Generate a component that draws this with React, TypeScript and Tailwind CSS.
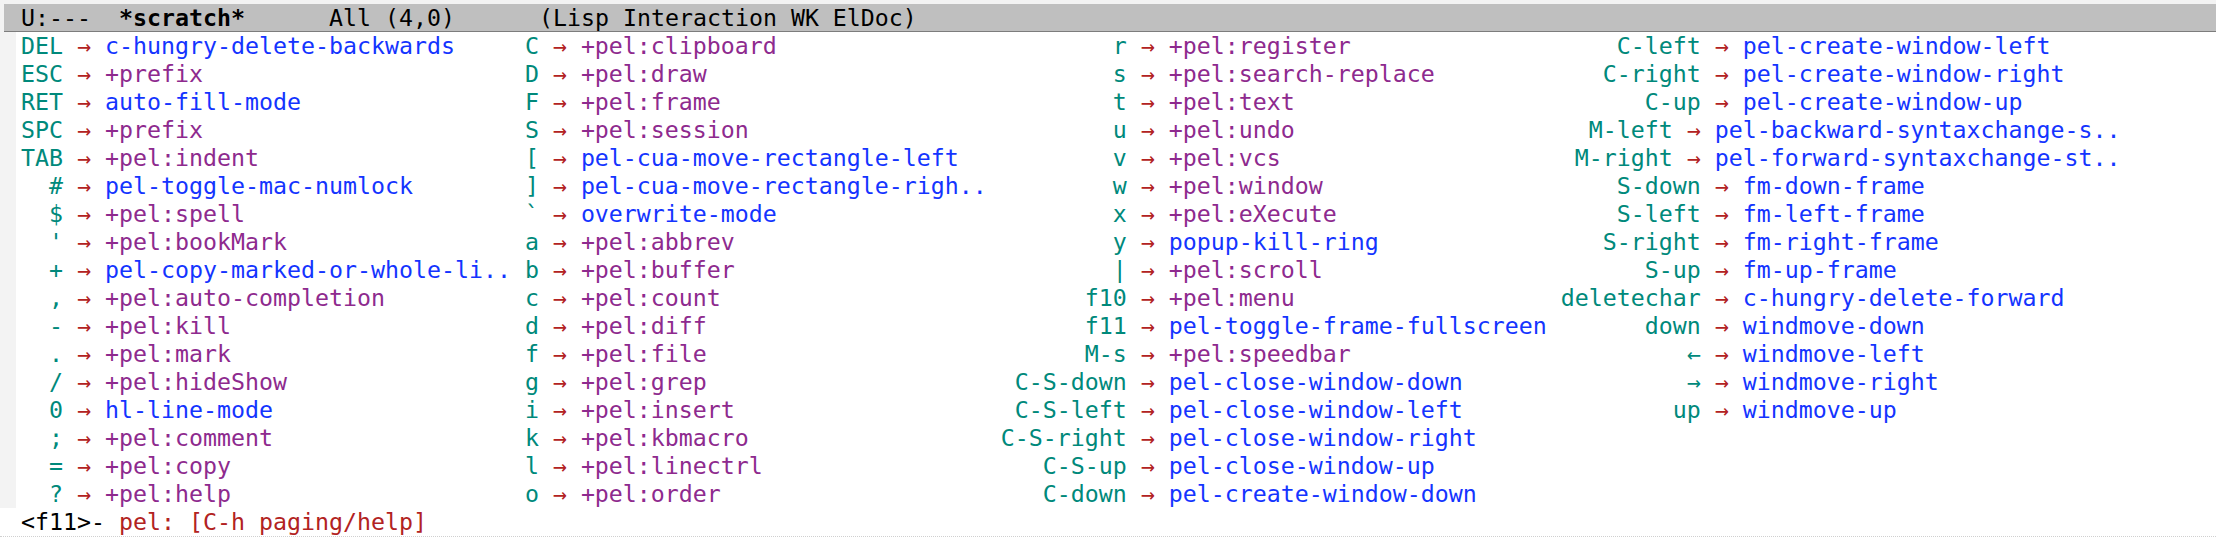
import React from "react";

type Entry = [string, string, boolean?];

// third item true = prefix group (purple), otherwise a command (blue)
const columns: { keyW: string; colW: string; items: Entry[] }[] = [
  {
    keyW: "w-[3ch]",
    colW: "w-[35ch]",
    items: [
      ["DEL", "c-hungry-delete-backwards"],
      ["ESC", "+prefix", true],
      ["RET", "auto-fill-mode"],
      ["SPC", "+prefix", true],
      ["TAB", "+pel:indent", true],
      ["#", "pel-toggle-mac-numlock"],
      ["$", "+pel:spell", true],
      ["'", "+pel:bookMark", true],
      ["+", "pel-copy-marked-or-whole-li.."],
      [",", "+pel:auto-completion", true],
      ["-", "+pel:kill", true],
      [".", "+pel:mark", true],
      ["/", "+pel:hideShow", true],
      ["0", "hl-line-mode"],
      [";", "+pel:comment", true],
      ["=", "+pel:copy", true],
      ["?", "+pel:help", true],
    ],
  },
  {
    keyW: "w-[1ch]",
    colW: "w-[33ch]",
    items: [
      ["C", "+pel:clipboard", true],
      ["D", "+pel:draw", true],
      ["F", "+pel:frame", true],
      ["S", "+pel:session", true],
      ["[", "pel-cua-move-rectangle-left"],
      ["]", "pel-cua-move-rectangle-righ.."],
      ["`", "overwrite-mode"],
      ["a", "+pel:abbrev", true],
      ["b", "+pel:buffer", true],
      ["c", "+pel:count", true],
      ["d", "+pel:diff", true],
      ["f", "+pel:file", true],
      ["g", "+pel:grep", true],
      ["i", "+pel:insert", true],
      ["k", "+pel:kbmacro", true],
      ["l", "+pel:linectrl", true],
      ["o", "+pel:order", true],
    ],
  },
  {
    keyW: "w-[9ch]",
    colW: "w-[39ch]",
    items: [
      ["r", "+pel:register", true],
      ["s", "+pel:search-replace", true],
      ["t", "+pel:text", true],
      ["u", "+pel:undo", true],
      ["v", "+pel:vcs", true],
      ["w", "+pel:window", true],
      ["x", "+pel:eXecute", true],
      ["y", "popup-kill-ring"],
      ["|", "+pel:scroll", true],
      ["f10", "+pel:menu", true],
      ["f11", "pel-toggle-frame-fullscreen"],
      ["M-s", "+pel:speedbar", true],
      ["C-S-down", "pel-close-window-down"],
      ["C-S-left", "pel-close-window-left"],
      ["C-S-right", "pel-close-window-right"],
      ["C-S-up", "pel-close-window-up"],
      ["C-down", "pel-create-window-down"],
    ],
  },
  {
    keyW: "w-[10ch]",
    colW: "w-[40ch]",
    items: [
      ["C-left", "pel-create-window-left"],
      ["C-right", "pel-create-window-right"],
      ["C-up", "pel-create-window-up"],
      ["M-left", "pel-backward-syntaxchange-s.."],
      ["M-right", "pel-forward-syntaxchange-st.."],
      ["S-down", "fm-down-frame"],
      ["S-left", "fm-left-frame"],
      ["S-right", "fm-right-frame"],
      ["S-up", "fm-up-frame"],
      ["deletechar", "c-hungry-delete-forward"],
      ["down", "windmove-down"],
      ["←", "windmove-left"],
      ["→", "windmove-right"],
      ["up", "windmove-up"],
    ],
  },
];

export default function App() {
  return (
    <div className="w-[2216px] h-[540px] overflow-hidden bg-[#f3f3f3] flex flex-col font-['DejaVu_Sans_Mono',monospace] text-[23.25px] leading-[28px] text-black">
      <div className="h-[4px]" />
      {/* mode line */}
      <div className="ml-[4px] h-[28px] bg-[#bfbfbf] border-b border-[#7d7d7d] pl-[17px] flex items-center whitespace-pre">
        <span>U:---  </span>
        <span className="font-bold">*scratch*</span>
        <span>      All (4,0)      (Lisp Interaction WK ElDoc)</span>
      </div>

      {/* which-key popup */}
      <div className="flex h-[476px]">
        <div className="w-[16px] bg-[#f3f3f3]" />
        <div className="flex-1 bg-white pl-[5px] flex gap-[1ch]">
          {columns.map((col, ci) => (
            <div key={ci} className={`${col.colW} flex flex-col`}>
              {col.items.map(([k, d, grp], ri) => (
                <div key={ri} className="flex h-[28px] whitespace-pre">
                  <span className={`${col.keyW} text-right text-[#00897b]`}>{k}</span>
                  <span className="text-[#b22222]"> → </span>
                  <span className={grp ? "text-[#8e2a8e]" : "text-[#1434ff]"}>{d}</span>
                </div>
              ))}
            </div>
          ))}
        </div>
      </div>

      {/* echo area */}
      <div className="h-[28px] bg-white pl-[21px] whitespace-pre flex items-center">
        <span>{"<f11>-"}</span>
        <span className="text-[#b22222]"> pel: [C-h paging/help]</span>
      </div>
      <div className="flex-1 bg-white border-t border-dotted border-[#d0d0d0]" />
    </div>
  );
}
